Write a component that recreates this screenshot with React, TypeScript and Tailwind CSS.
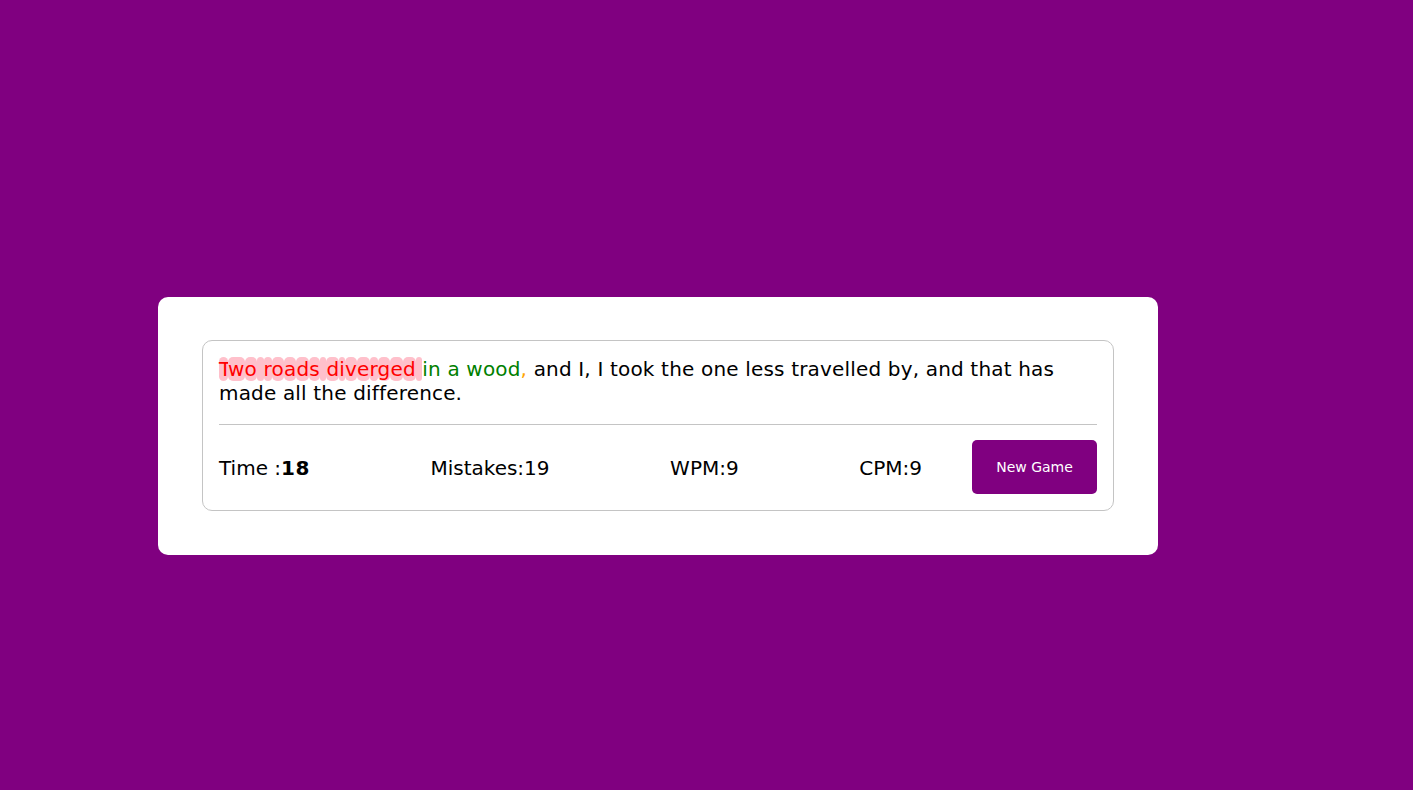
import React from "react";

const wrong = "Two roads diverged ";
const right = "in a wood";
const current = ",";
const rest = " and I, I took the one less travelled by, and that has made all the difference.";

export default function App() {
  return (
    <div
      className="min-h-[790px] w-full bg-[#800080] pt-[297px] pl-[158px]"
      style={{ fontFamily: '"DejaVu Sans", Verdana, sans-serif' }}
    >
      <div className="w-[1000px] rounded-[10px] bg-white px-[44px] pt-[43px] pb-[44px]">
        <div className="rounded-[10px] border border-[#c4c4c4] p-4">
          <p className="text-[20px] leading-[24px] tracking-[0.17px] text-black">
            {wrong.split("").map((c, i) => (
              <span key={"w" + i} className="rounded-[5px] bg-[#ffc0cb] text-[#ff0000]">
                {c}
              </span>
            ))}
            <span className="text-[#008000]">{right}</span>
            <span className="text-[#ffa500]">{current}</span>
            <span>{rest}</span>
          </p>
          <div className="mt-[19px] h-px bg-[#c4c4c4]" />
          <div className="mt-[15px] flex items-center text-[20px] leading-[24px] text-black">
            <div className="mr-[50px] flex flex-1 items-center justify-between pt-[2px]">
              <span>
                Time :<b className="tracking-[0.5px]">18</b>
              </span>
              <span>Mistakes:19</span>
              <span>WPM:9</span>
              <span>CPM:9</span>
            </div>
            <button className="h-[54px] w-[125px] rounded-[5px] bg-[#800080] text-[14px] text-white">
              New Game
            </button>
          </div>
        </div>
      </div>
    </div>
  );
}
